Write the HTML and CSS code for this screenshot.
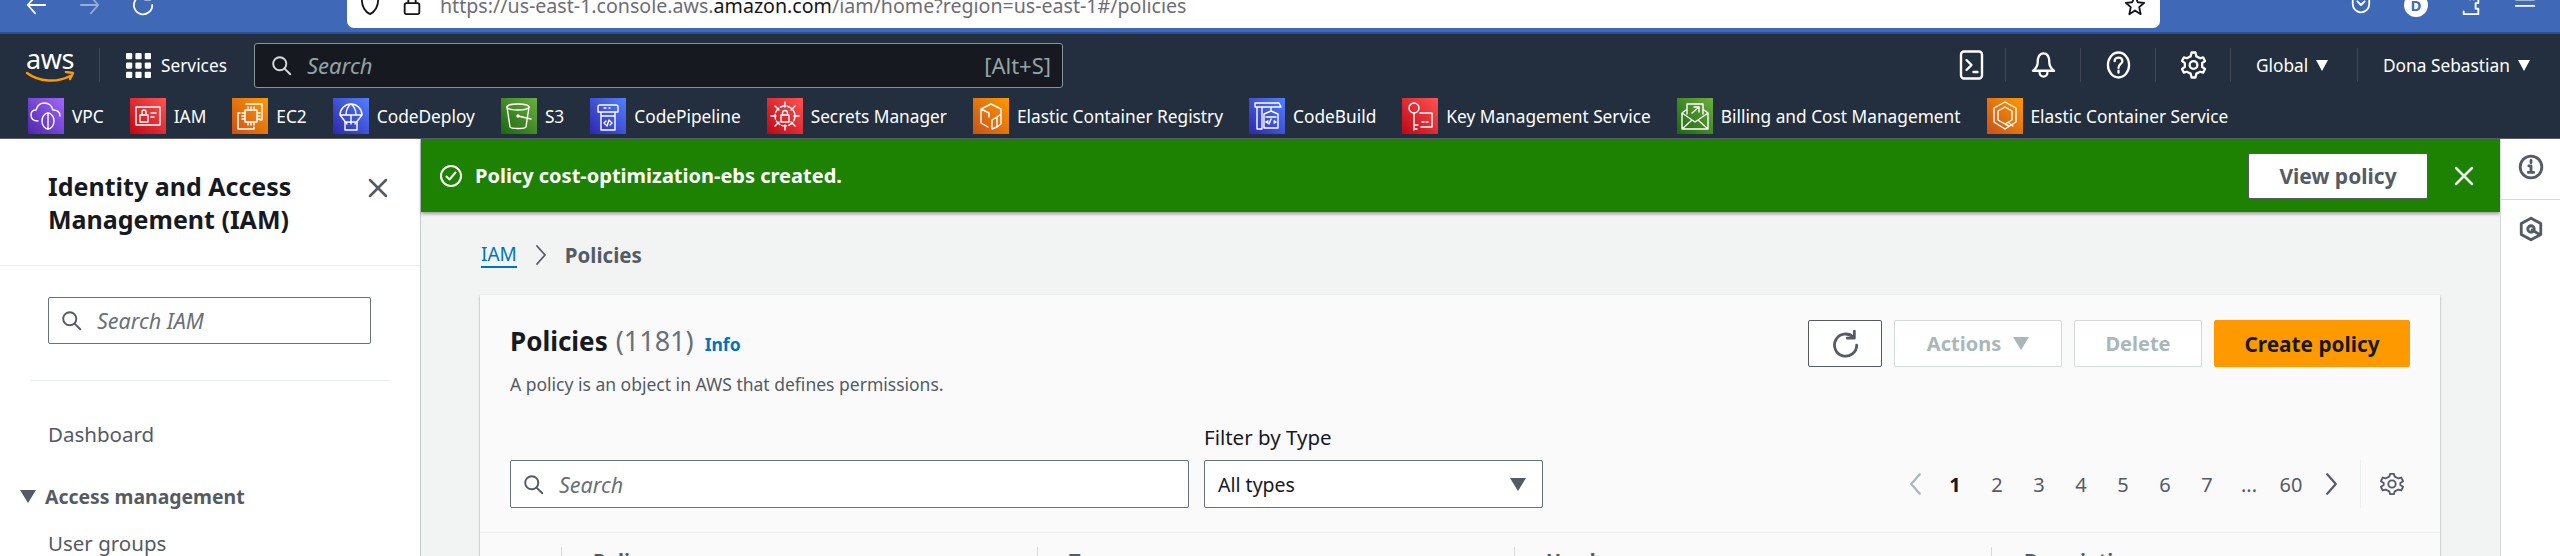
FILE: index.html
```html
<!DOCTYPE html>
<html lang="en">
<head>
<meta charset="utf-8">
<title>Policies | IAM</title>
<link rel="stylesheet" href="styles.css">
</head>
<body>
<div class="browser">
  <div class="browser-nav">
    <svg class="bi" viewBox="0 0 24 24"><path d="M22 12H3M11 3l-8 9 8 9"/></svg>
    <svg class="bi dim" viewBox="0 0 24 24"><path d="M2 12h19M13 3l8 9-8 9"/></svg>
    <svg class="bi" viewBox="0 0 24 24"><path d="M18 5a10 10 0 1 0 3 7M19 0v6h-6"/></svg>
  </div>
  <div class="urlbar">
    <svg class="ui shield" viewBox="0 0 24 24"><path d="M12 2l9 3c0 9-3 14-9 17C6 19 3 14 3 5z"/></svg>
    <svg class="ui lock" viewBox="0 0 24 24"><rect x="4" y="10" width="16" height="12" rx="2"/><path d="M8 10V6a4 4 0 0 1 8 0v4"/></svg>
    <span class="url">https://us-east-1.console.aws.<b>amazon.com</b>/iam/home?region=us-east-1#/policies</span>
    <svg class="ui star" viewBox="0 0 24 24"><path d="M12 2l3 7 7 .6-5.400 4.700L18.200 22 12 18l-6.200 4 1.600-7.700L2 9.600 9 9z"/></svg>
  </div>
  <div class="browser-tools">
    <svg class="bi" viewBox="0 0 24 24"><path d="M3 3h18v8a9 9 0 0 1-18 0zM8 8l4 4 4-4"/></svg>
    <span class="avatar">D</span>
    <svg class="bi" viewBox="0 0 24 24"><path d="M4 3h7v3a2 2 0 0 1 4 0v-3h5v7h-3v6h3v6H4v-3"/></svg>
    <svg class="bi" viewBox="0 0 24 24"><path d="M2 6h20M2 13h20"/></svg>
  </div>
</div>

<header class="topnav">
  <div class="nav-top">
    <div class="logo"><span class="logo-text">aws</span>
      <svg class="smile" viewBox="0 0 48 12"><path d="M1 2c12 9 30 10 43 3"/><path d="M40 1l7 1-3 6"/></svg>
    </div>
    <div class="vline first"></div>
    <svg class="grid-ico" viewBox="0 0 24 24"><g><rect x="0" y="0" width="6" height="6" rx="1"/><rect x="9" y="0" width="6" height="6" rx="1"/><rect x="18" y="0" width="6" height="6" rx="1"/><rect x="0" y="9" width="6" height="6" rx="1"/><rect x="9" y="9" width="6" height="6" rx="1"/><rect x="18" y="9" width="6" height="6" rx="1"/><rect x="0" y="18" width="6" height="6" rx="1"/><rect x="9" y="18" width="6" height="6" rx="1"/><rect x="18" y="18" width="6" height="6" rx="1"/></g></svg>
    <span class="nav-label services">Services</span>
    <div class="nav-search">
      <svg class="mag light" viewBox="0 0 24 24"><circle cx="10" cy="10" r="7.500"/><path d="M15.500 15.500L22 22"/></svg>
      <span class="nav-search-ph">Search</span>
      <span class="nav-search-key">[Alt+S]</span>
    </div>
    <div class="nav-right">
      <span class="nav-ico term"><svg viewBox="0 0 24 30"><rect x="1.500" y="1.500" width="21" height="27" rx="3"/><path d="M7 10l5 5-5 5M14 22h4"/></svg></span>
      <span class="nav-ico"><svg viewBox="0 0 26 30"><path d="M13 3c5 0 6 5 6 9 0 4 2 7 5 9H2c3-2 5-5 5-9 0-4 1-9 6-9zM9 23a4 4 0 0 0 8 0"/></svg></span>
      <span class="nav-ico"><svg viewBox="0 0 26 30"><ellipse cx="13" cy="15" rx="11" ry="13"/><path d="M9 11c0-5 8-5 8 0 0 3-4 3-4 7"/><path d="M13 21v2"/></svg></span>
      <span class="nav-ico"><svg viewBox="0 0 26 30"><circle cx="13" cy="15" r="4"/><path d="M11 2h4l1 4 4 2 3-1 2 4-3 2v4l3 2-2 4-3-1-4 2-1 4h-4l-1-4-4-2-3 1-2-4 3-2v-4l-3-2 2-4 3 1 4-2z"/></svg></span>
      <span class="nav-menu region">Global <i class="tri"></i></span>
      <span class="nav-menu user">Dona Sebastian <i class="tri"></i></span>
    </div>
  </div>
  <nav class="favs">
    <a class="fav"><span class="tile purple"><svg viewBox="0 0 36 36"><path d="M10 23c-5 0-7-3-7-6s2-5 5-5c1-5 5-7 8-7 5 0 8 3 9 7 4 0 7 2 7 6"/><ellipse cx="20" cy="23" rx="6" ry="8"/><path d="M20 15v16"/></svg></span>VPC</a>
    <a class="fav"><span class="tile red"><svg viewBox="0 0 36 36"><rect x="6" y="9" width="24" height="18"/><rect x="10" y="17" width="8" height="7"/><path d="M12 17v-3a2 2 0 0 1 4 0v3M21 15h5M21 19h3"/></svg></span>IAM</a>
    <a class="fav"><span class="tile orange"><svg viewBox="0 0 36 36"><rect x="13" y="12" width="12" height="12"/><path d="M16 9v3M19 9v3M22 9v3M16 24v3M19 24v3M22 24v3M10 15h3M10 18h3M10 21h3M25 15h3M25 18h3M25 21h3M14 6h16v16h-2M8 15H6v16h16v-2"/></svg></span>EC2</a>
    <a class="fav"><span class="tile blue"><svg viewBox="0 0 36 36"><path d="M7 17a11 11 0 0 1 22 0zM18 6c-4 3-5 7-5 11M18 6c4 3 5 7 5 11M7 17l7 9M29 17l-7 9M18 17v9"/><rect x="12" y="24" width="12" height="8"/></svg></span>CodeDeploy</a>
    <a class="fav"><span class="tile green"><svg viewBox="0 0 36 36"><ellipse cx="17" cy="9" rx="11" ry="3"/><path d="M6 9l3 20c1 2 15 2 16 0l3-20"/><circle cx="17" cy="18" r="1"/><path d="M17 18l13 3"/></svg></span>S3</a>
    <a class="fav"><span class="tile blue"><svg viewBox="0 0 36 36"><path d="M8 14V9c0-1 1-2 2-2h16c1 0 2 1 2 2v5zM11 18h14v14H11zM11 14v4M25 14v4M14 10h2M19 10h1M16 27l-2-2 2-2M20 27l2-2-2-2M19 22l-2 6"/></svg></span>CodePipeline</a>
    <a class="fav"><span class="tile red"><svg viewBox="0 0 36 36"><circle cx="18" cy="18" r="10" stroke-dasharray="5 2"/><rect x="14" y="17" width="8" height="7"/><path d="M15.500 17v-2a2.500 2.500 0 0 1 5 0v2M18 4v5M18 27v5M4 18h5M27 18h5M8 8l4 4M28 8l-4 4M8 28l4-4M28 28l-4-4"/></svg></span>Secrets Manager</a>
    <a class="fav"><span class="tile orange"><svg viewBox="0 0 36 36"><path d="M18 6l10 5v5M18 6L8 11v14l7 4M8 11l8 4v4M28 16l-4 3v10l-5 2v-9l5-3M28 16v10l-4 3"/></svg></span>Elastic Container Registry</a>
    <a class="fav"><span class="tile blue"><svg viewBox="0 0 36 36"><path d="M6 5h24l2 4H6zM8 9v22M13 9v22M8 31h5M22 9v4M15 16l7-3 7 3v14H15zM17 19h10M22 21l-2 5M19 23l-2 1 2 1M25 23l2 1-2 1"/></svg></span>CodeBuild</a>
    <a class="fav"><span class="tile red"><svg viewBox="0 0 36 36"><circle cx="12" cy="10" r="5"/><path d="M12 15v17M12 27h4M12 31h3M18 15h12v14H19M20 24h2M24 24h2"/></svg></span>Key Management Service</a>
    <a class="fav"><span class="tile green"><svg viewBox="0 0 36 36"><path d="M5 15v16h26V15l-4-3M9 12l-4 3 13 9 13-9M5 31l10-9M31 31l-10-9M10 16V6h16v10M15 15l7-6M17 9h5v5"/></svg></span>Billing and Cost Management</a>
    <a class="fav"><span class="tile orange"><svg viewBox="0 0 36 36"><path d="M18 4l11 6v14l-11 7-11-7V10zM18 9l7 4v9l-7 4-7-4v-9zM22 25l4 3M18 26l4 2"/></svg></span>Elastic Container Service</a>
  </nav>
</header>

<div class="main">
  <aside class="sidebar">
    <div class="side-head">
      <h2>Identity and Access Management (IAM)</h2>
      <svg class="close dark" viewBox="0 0 20 20"><path d="M2 2l16 16M18 2L2 18"/></svg>
    </div>
    <div class="side-search">
      <div class="input side-input">
        <svg class="mag" viewBox="0 0 24 24"><circle cx="10" cy="10" r="7.500"/><path d="M15.500 15.500L22 22"/></svg>
        <span class="ph">Search IAM</span>
      </div>
    </div>
    <div class="side-links">
      <a class="side-link">Dashboard</a>
      <div class="side-group"><i class="tri-g"></i>Access management</div>
      <a class="side-link sub">User groups</a>
    </div>
  </aside>

  <div class="content">
    <div class="flash">
      <svg class="flash-ico" viewBox="0 0 24 24"><circle cx="12" cy="12" r="10"/><path d="M7.500 12.500l3 3 6-7"/></svg>
      <span class="flash-text">Policy cost-optimization-ebs created.</span>
      <button class="view-btn">View policy</button>
      <svg class="close light-x" viewBox="0 0 20 20"><path d="M2 2l16 16M18 2L2 18"/></svg>
    </div>
    <div class="crumbs">
      <a class="crumb-link">IAM</a>
      <svg class="crumb-sep" viewBox="0 0 12 20"><path d="M2 1l8 9-8 9"/></svg>
      <span class="crumb-cur">Policies</span>
    </div>
    <section class="card">
      <div class="card-head">
        <div class="title-row">
          <div class="title-block">
            <h1>Policies <span class="count">(1181)</span> <a class="info">Info</a></h1>
            <p class="desc">A policy is an object in AWS that defines permissions.</p>
          </div>
          <div class="actions">
            <button class="btn icon-btn"><svg viewBox="0 0 24 24"><path d="M19 6a9.500 9.500 0 1 0 3 7M20 1v6h-6"/></svg></button>
            <button class="btn off actions-btn">Actions <i class="tri-off"></i></button>
            <button class="btn off delete-btn">Delete</button>
            <button class="btn primary">Create policy</button>
          </div>
        </div>
        <div class="filter-row">
          <div class="input table-search">
            <svg class="mag" viewBox="0 0 24 24"><circle cx="10" cy="10" r="7.500"/><path d="M15.500 15.500L22 22"/></svg>
            <span class="ph">Search</span>
          </div>
          <div class="filter">
            <label class="filter-label">Filter by Type</label>
            <div class="input select"><span>All types</span><i class="tri-g"></i></div>
          </div>
          <div class="pager">
            <svg class="chev off-chev" viewBox="0 0 12 20"><path d="M10 1l-8 9 8 9"/></svg>
            <span class="pg cur">1</span><span class="pg">2</span><span class="pg">3</span><span class="pg">4</span><span class="pg">5</span><span class="pg">6</span><span class="pg">7</span><span class="pg">...</span><span class="pg">60</span>
            <svg class="chev" viewBox="0 0 12 20"><path d="M2 1l8 9-8 9"/></svg>
            <span class="pg-div"></span>
            <svg class="pg-gear" viewBox="0 0 26 26"><circle cx="13" cy="13" r="4"/><path d="M11 2h4l1 3 4 2 3-1 2 4-3 2v2l3 2-2 4-3-1-4 2-1 3h-4l-1-3-4-2-3 1-2-4 3-2v-2L1 10l2-4 3 1 4-2z"/></svg>
          </div>
        </div>
      </div>
      <div class="table-head">
        <span class="th th-check"></span>
        <span class="th th-name">Policy name</span>
        <span class="th th-type">Type</span>
        <span class="th th-used">Used as</span>
        <span class="th th-desc">Description</span>
      </div>
    </section>
  </div>

  <aside class="rail">
    <div class="rail-top"><svg viewBox="0 0 24 24"><circle cx="12" cy="12" r="10"/><path class="thick" d="M12 6v2M10 11h2v6M9.500 17h5"/></svg></div>
    <div class="rail-item"><svg viewBox="0 0 24 24"><path d="M12 2l9 5v10l-9 5-9-5V7z"/><circle cx="12" cy="12" r="3"/><path d="M13 13l7 4"/></svg></div>
  </aside>
</div>
</body>
</html>
```

FILE: styles.css
```css
* { box-sizing: border-box; }
html, body { margin: 0; height: 556px; overflow: hidden; }
body { font-family: "Noto Sans", "Open Sans", sans-serif; font-size: 20px; color: #16191f; display: flex; flex-direction: column; background: #fff; }
svg { fill: none; stroke-linecap: round; stroke-linejoin: round; flex: none; }
h1, h2, p { margin: 0; }

/* browser chrome */
.browser { height: 34px; flex: none; display: flex; align-items: flex-end; background: #3f68b7; border-bottom: 2px solid #2c4f93; padding-bottom: 4px; overflow: hidden; }
.browser-nav { width: 347px; height: 46px; display: flex; align-items: center; gap: 32px; padding-left: 25px; flex: none; }
.bi { width: 22px; height: 22px; stroke: #fff; stroke-width: 2; }
.bi.dim { opacity: .45; }
.urlbar { width: 1813px; height: 46px; flex: none; background: #fff; border-radius: 0 0 7px 7px; display: flex; align-items: center; padding: 0 14px 0 12px; }
.ui { width: 22px; height: 22px; stroke: #15141a; stroke-width: 2; }
.shield { margin-right: 20px; }
.lock { margin-right: 17px; }
.url { flex: 1; font-size: 19.600px; color: #6d6d75; white-space: nowrap; }
.url b { font-weight: 400; color: #15141a; }
.browser-tools { display: flex; height: 46px; align-items: center; gap: 32px; padding-left: 190px; }
.avatar { width: 24px; height: 24px; border-radius: 50%; background: #fff; color: #3f68b7; font-size: 15px; font-weight: 700; display: flex; align-items: center; justify-content: center; flex: none; }

/* top nav */
.topnav { flex: none; height: 105px; background: #232f3e; border-bottom: 1px solid #545b64; color: #fff; }
.nav-top { height: 60px; display: flex; align-items: center; padding: 2px 0 0 26px; }
.logo { width: 48px; height: 34px; display: flex; flex-direction: column; align-items: center; flex: none; }
.logo-text { font-size: 27px; line-height: 22px; letter-spacing: -.5px; color: #fff; }
.smile { width: 48px; height: 12px; stroke: #ff9900; stroke-width: 2.500; margin-top: 1px; }
.vline { width: 1px; height: 34px; background: #414750; flex: none; }
.vline.first { margin-left: 25px; margin-right: 26px; }
.grid-ico { width: 25px; height: 25px; fill: #fff; flex: none; }
.nav-label { font-size: 17.300px; }
.services { margin-left: 10px; margin-right: 26px; width: 67px; flex: none; }
.nav-search { width: 809px; height: 45px; flex: none; background: #16191f; border: 1px solid #879596; border-radius: 3px; display: flex; align-items: center; padding: 0 11px 0 16px; font-size: 22px; color: #95a5a6; }
.mag { width: 21px; height: 21px; stroke: #545b64; stroke-width: 2.200; }
.mag.light { stroke: #d5dbdb; }
.nav-search-ph { font-style: italic; margin-left: 15px; flex: 1; }
.nav-right { display: flex; align-items: center; height: 34px; margin-left: auto; }
.nav-ico { width: 75px; height: 34px; display: flex; align-items: center; justify-content: center; border-left: 1px solid #414750; flex: none; }
.nav-ico svg { width: 25px; height: 30px; stroke: #fff; stroke-width: 2.400; }
.nav-ico.term { border-left: 0; width: 58px; padding-right: 10px; }
.nav-menu { font-size: 17.300px; height: 34px; display: flex; align-items: center; gap: 8px; border-left: 1px solid #414750; flex: none; }
.region { width: 127px; padding-left: 25px; }
.user { width: 203px; padding-left: 25px; }
.tri { width: 0; height: 0; border-left: 6px solid transparent; border-right: 6px solid transparent; border-top: 11px solid #fff; }
.favs { height: 44px; display: flex; align-items: center; gap: 26px; padding-left: 28px; font-size: 17.300px; }
.fav { display: flex; align-items: center; gap: 8px; white-space: nowrap; color: #fff; }
.tile { width: 36px; height: 36px; display: block; flex: none; }
.tile svg { width: 36px; height: 36px; stroke: #fff; stroke-width: 1.400; display: block; }
.purple { background: linear-gradient(45deg, #4d27a8, #a166ff); }
.red { background: linear-gradient(45deg, #bd0816, #ff5252); }
.orange { background: linear-gradient(45deg, #c8511b, #ff9900); }
.blue { background: linear-gradient(45deg, #2e27ad, #527fff); }
.green { background: linear-gradient(45deg, #1b660f, #6cae3e); }

/* layout */
.main { flex: 1; min-height: 0; display: flex; overflow: hidden; }
.sidebar { width: 421px; flex: none; background: #fff; border-right: 1px solid #c6c9cc; }
.content { flex: 1; min-width: 0; background: #f2f3f3; display: flex; flex-direction: column; }
.rail { width: 60px; flex: none; background: #fff; border-left: 1px solid #d5dbdb; }

/* sidebar */
.side-head { height: 127px; border-bottom: 1px solid #eaeded; padding: 31px 30px 0 48px; display: flex; justify-content: space-between; align-items: flex-start; }
.side-head h2 { font-size: 25px; line-height: 33px; font-weight: 700; width: 300px; }
.close { width: 20px; height: 20px; stroke-width: 2.500; }
.close.dark { stroke: #545b64; margin-top: 8px; margin-right: 2px; }
.side-search { margin: 0 30px; padding: 31px 18px 36px; border-bottom: 1px solid #eaeded; height: 115px; }
.input { display: flex; align-items: center; background: #fff; border: 1px solid #687078; border-radius: 2px; }
.side-input { height: 47px; width: 323px; padding-left: 12px; }
.ph { font-style: italic; color: #687078; margin-left: 15px; font-size: 21.500px; }
.side-links { display: flex; flex-direction: column; padding-top: 41px; }
.side-link { color: #545b64; padding-left: 48px; line-height: 25px; font-size: 20.500px; }
.side-group { display: flex; align-items: center; padding-left: 20px; font-weight: 700; font-size: 19.400px; color: #545b64; margin-top: 37px; line-height: 25px; }
.side-group .tri-g { margin-right: 9px; }
.side-link.sub { margin-top: 22px; }
.tri-g { width: 0; height: 0; flex: none; border-left: 8px solid transparent; border-right: 8px solid transparent; border-top: 13px solid #545b64; }

/* flash */
.flash { height: 73px; flex: none; background: #1d8102; color: #fff; display: flex; align-items: center; padding: 0 26px 0 18px; box-shadow: 0 2px 3px rgba(0,0,0,.35); }
.flash-ico { width: 24px; height: 24px; stroke: #fff; stroke-width: 2; }
.flash-text { font-weight: 700; margin-left: 12px; flex: 1; font-size: 20px; }
.view-btn { width: 180px; height: 46px; background: #fff; border: 1px solid #545b64; border-radius: 2px; color: #545b64; font: 700 21px "Noto Sans", sans-serif; padding: 0; margin-right: 2px; }
.close.light-x { stroke: #eaeded; margin-left: 24px; }

/* breadcrumb */
.crumbs { height: 83px; flex: none; display: flex; align-items: center; padding: 3px 0 0 60px; }
.crumb-link { color: #0073bb; border-bottom: 2px solid #0073bb; line-height: 24px; font-size: 19px; }
.crumb-sep { width: 12px; height: 22px; stroke: #545b64; stroke-width: 1.800; margin: 0 18px; }
.crumb-cur { color: #545b64; font-weight: 700; font-size: 20.500px; }

/* card */
.card { margin: 0 60px 0 59px; flex: 1; background: #fafafa; box-shadow: 0 1px 2px rgba(0,28,36,.4); }
.card-head { height: 238px; padding: 24px 30px 0 30px; border-bottom: 1px solid #eaeded; display: flex; flex-direction: column; }
.title-row { display: flex; justify-content: space-between; align-items: flex-start; height: 116px; }
.title-block h1 { font-size: 26px; font-weight: 700; line-height: 44px; display: flex; align-items: baseline; gap: 8px; }
.count { font-weight: 400; color: #687078; font-size: 27px; }
.info { font-size: 17.500px; font-weight: 700; color: #0073bb; margin-left: 3px; }
.desc { font-size: 17.500px; line-height: 22px; color: #545b64; margin-top: 7px; }
.actions { display: flex; gap: 12px; margin-top: 1px; }
.btn { height: 47px; border-radius: 2px; border: 1px solid #545b64; background: #fff; font: 700 20px "Noto Sans", sans-serif; padding: 0; display: flex; align-items: center; justify-content: center; }
.icon-btn { width: 74px; }
.icon-btn svg { width: 28px; height: 28px; stroke: #545b64; stroke-width: 2.400; }
.off { border-color: #d5dbdb; color: #aab7b8; }
.actions-btn { width: 168px; gap: 12px; }
.delete-btn { width: 128px; }
.tri-off { width: 0; height: 0; border-left: 8px solid transparent; border-right: 8px solid transparent; border-top: 13px solid #aab7b8; }
.primary { width: 196px; background: #ff9900; border-color: #ff9900; color: #16191f; font-size: 20.800px; }
.filter-row { display: flex; align-items: flex-end; height: 73px; }
.table-search { width: 679px; height: 48px; padding-left: 12px; flex: none; }
.filter { margin-left: 15px; width: 339px; flex: none; }
.filter-label { display: block; line-height: 25px; margin-bottom: 10px; font-size: 20.500px; }
.select { height: 48px; justify-content: space-between; padding: 0 16px 0 13px; font-size: 19.500px; }
.pager { margin-left: auto; margin-right: 6px; display: flex; align-items: center; height: 48px; color: #545b64; }
.pg { width: 42px; text-align: center; flex: none; }
.pg.cur { font-weight: 700; color: #16191f; }
.chev { width: 13px; height: 24px; stroke: #545b64; stroke-width: 2; margin: 0 7px 0 13px; }
.off-chev { stroke: #aab7b8; margin: 0 12px 0 8px; }
.pg-div { width: 1px; height: 48px; background: #eaeded; margin-left: 15px; flex: none; }
.pg-gear { width: 24px; height: 24px; stroke: #545b64; stroke-width: 2; margin: 0 0 0 19px; }
.table-head { display: flex; height: 60px; padding-top: 14px; font-weight: 700; color: #545b64; }
.th { height: 40px; border-left: 1px solid #d5dbdb; padding-left: 31px; line-height: 28px; flex: none; }
.th-check { width: 81px; border-left: 0; padding: 0; }
.th-name { width: 476px; }
.th-type { width: 477px; }
.th-used { width: 477px; }
.th-desc { width: 360px; padding-left: 32px; }

/* rail */
.rail-top { height: 61px; border-bottom: 1px solid #d5dbdb; display: flex; align-items: center; justify-content: center; padding-bottom: 4px; }
.rail svg { width: 26px; height: 26px; stroke: #545b64; stroke-width: 2.600; }
.rail-item { display: flex; justify-content: center; padding-top: 16px; }
```
